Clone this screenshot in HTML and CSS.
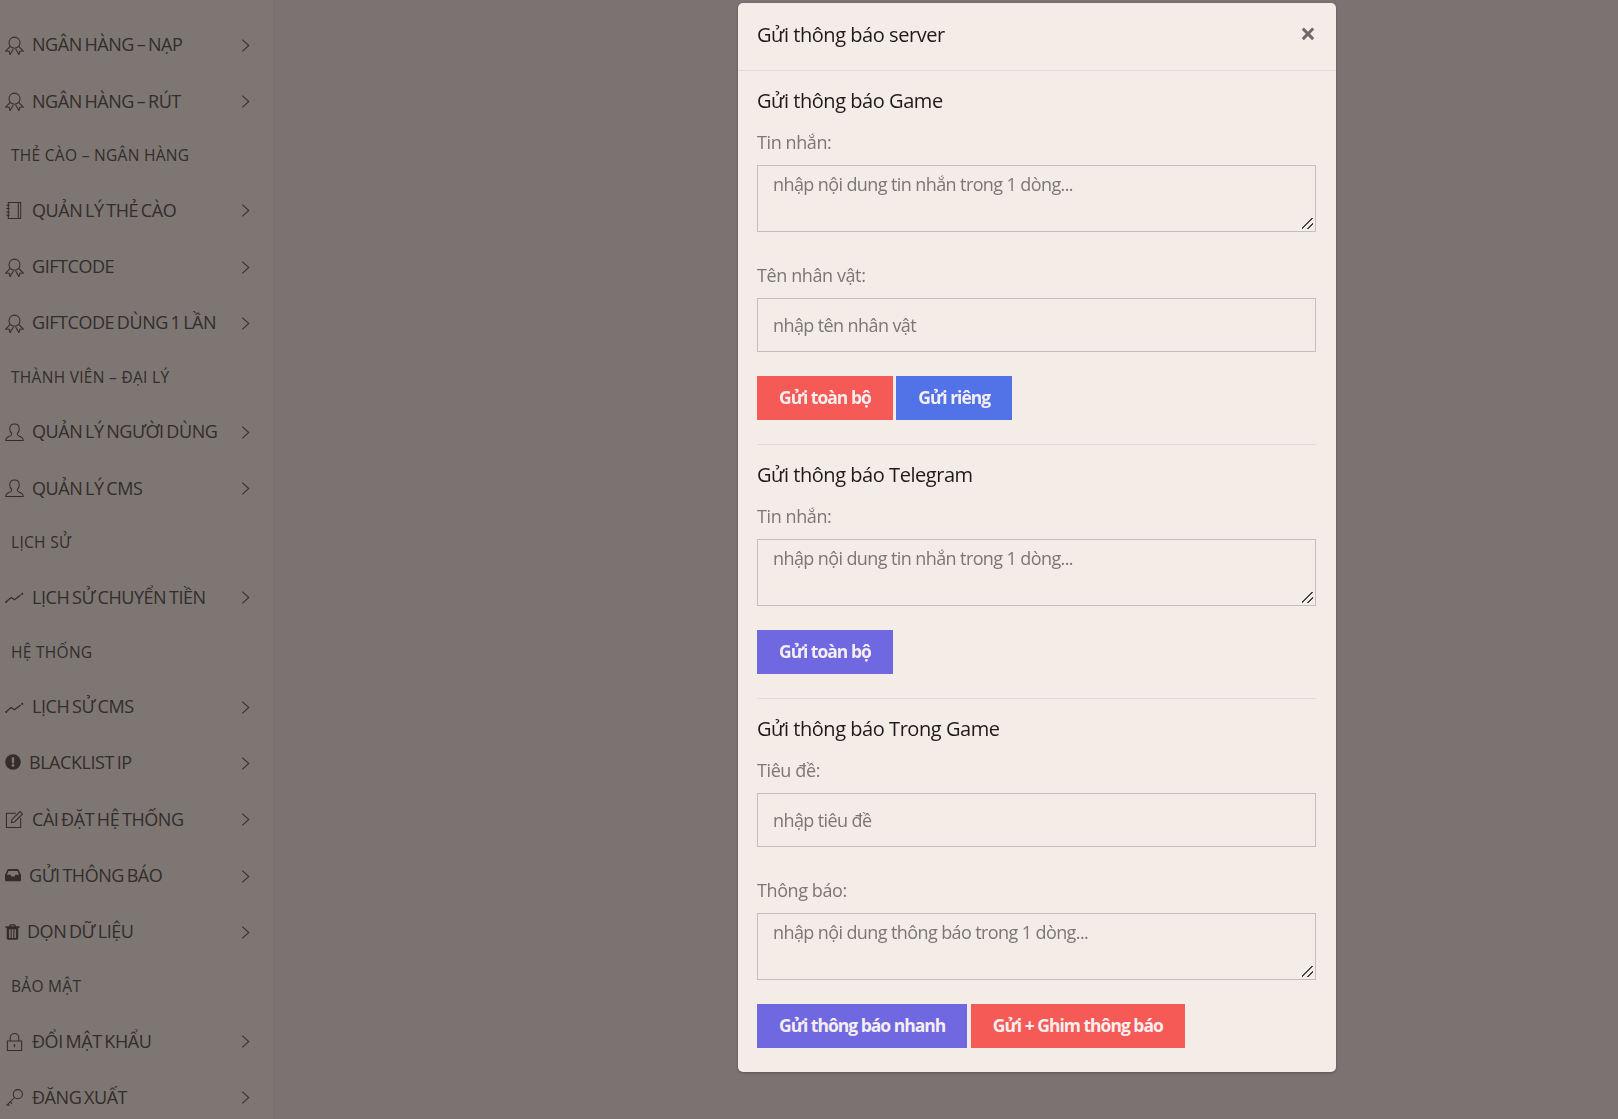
FILE: index.html
```html
<!DOCTYPE html>
<html lang="vi">
<head>
<meta charset="utf-8">
<title>Gửi thông báo server</title>
<link rel="stylesheet" href="styles.css">
</head>
<body>
<svg class="defs" width="0" height="0" aria-hidden="true">
  <symbol id="i-badge" viewBox="0 0 20 20"><g fill="none" stroke="currentColor" stroke-width="1.100"><circle cx="10" cy="7" r="5.800"/><path d="M5.600 11 .8 15.800l3.600.3.9 3.500 3.500-6M14.400 11l4.800 4.800-3.600.3-.9 3.500-3.500-6"/></g></symbol>
  <symbol id="i-book" viewBox="0 0 20 20"><g fill="none" stroke="currentColor" stroke-width="1.100"><path d="M3.500 1.500h13v17h-13zM14 1.500v17"/><path d="M1.500 4.500h3.500M1.500 8h3.500M1.500 11.500h3.500M1.500 15h3.500"/></g></symbol>
  <symbol id="i-user" viewBox="0 0 20 20"><path fill="none" stroke="currentColor" stroke-width="1.100" d="M.8 18.500c0-3 1.500-3.600 4-4.500 2-.8 2.500-1.500 2.300-2.800C5.700 10 5 8 5 6c0-3.200 2-5 5-5s5 1.800 5 5c0 2-.7 4-2.100 5.200-.2 1.300.3 2 2.300 2.800 2.500.9 4 1.500 4 4.500z"/></symbol>
  <symbol id="i-graph" viewBox="0 0 20 20"><g fill="none" stroke="currentColor" stroke-width="1.300"><path d="M1.200 14.500 6.500 10l3.500 2.400L16.500 7.400"/></g><circle cx="1.300" cy="14.700" r="1.100" fill="currentColor"/><circle cx="18.200" cy="6.200" r="1.100" fill="currentColor"/></symbol>
  <symbol id="i-alert" viewBox="0 0 16 16"><circle cx="8" cy="8" r="7.800" fill="currentColor"/><rect class="cut" x="6.800" y="3.200" width="2.400" height="6" rx=".6"/><circle class="cut" cx="8" cy="11.400" r="1.400"/></symbol>
  <symbol id="i-edit" viewBox="0 0 20 20"><g fill="none" stroke="currentColor" stroke-width="1.100"><path d="M11.500 3.500H1.500v15h15V8.500"/><path d="m6.800 13.200.6-3.200L15.800 1.600l2.600 2.600-8.400 8.400z"/></g></symbol>
  <symbol id="i-inbox" viewBox="0 0 16 14"><path fill="currentColor" fill-rule="evenodd" d="M3.500 1h9c.5 0 .9.300 1.100.7L16 7v5c0 .7-.6 1.300-1.300 1.300H1.300C.6 13.300 0 12.700 0 12V7l2.400-5.300C2.600 1.300 3 1 3.500 1zm-.1 2L2 6.700h3.600l.9 1.800h3l.9-1.800H14L12.600 3z"/></symbol>
  <symbol id="i-trash" viewBox="0 0 14 16"><path fill="currentColor" fill-rule="evenodd" d="M5 .3h4c.5 0 .9.300 1 .7l.5 1.300H14v1.700h-1.200V14c0 1-.8 1.800-1.700 1.800H2.900C2 15.800 1.200 15 1.200 14V4H0V2.300h3.500L4 1c.1-.4.500-.7 1-.7zM5 2.300h4L8.600 1.400H5.400zM3.600 5.300v8.800h1.500V5.300zm2.600 0v8.800h1.600V5.300zm2.700 0v8.800h1.500V5.300z"/></symbol>
  <symbol id="i-lock" viewBox="0 0 20 20"><g fill="none" stroke="currentColor" stroke-width="1.100"><path d="M2.500 9.500h15v10h-15zM5.500 9.500V6a4.500 4.500 0 0 1 9 0v3.500"/><path d="M10 13.500v2.500"/></g><circle cx="10" cy="13.800" r="1" fill="currentColor"/></symbol>
  <symbol id="i-key" viewBox="0 0 20 20"><g fill="none" stroke="currentColor" stroke-width="1.100"><circle cx="13.500" cy="6.500" r="4.800"/><path d="M10 10 1.500 18.500M3 17l1.800 1.800M5.500 14.500l2 2"/></g></symbol>
  <symbol id="i-chev" viewBox="0 0 10 14"><path fill="none" stroke="currentColor" stroke-width="1.100" d="m2 1.500 6 5.500-6 5.500"/></symbol>
</svg>

<aside class="sidebar">
  <nav class="menu">
    <a class="item"><svg class="ico"><use href="#i-badge"/></svg><span class="lbl">NGÂN HÀNG – NẠP</span><svg class="chev"><use href="#i-chev"/></svg></a>
    <a class="item"><svg class="ico"><use href="#i-badge"/></svg><span class="lbl">NGÂN HÀNG – RÚT</span><svg class="chev"><use href="#i-chev"/></svg></a>
    <div class="head">THẺ CÀO – NGÂN HÀNG</div>
    <a class="item"><svg class="ico"><use href="#i-book"/></svg><span class="lbl">QUẢN LÝ THẺ CÀO</span><svg class="chev"><use href="#i-chev"/></svg></a>
    <a class="item"><svg class="ico"><use href="#i-badge"/></svg><span class="lbl">GIFTCODE</span><svg class="chev"><use href="#i-chev"/></svg></a>
    <a class="item"><svg class="ico"><use href="#i-badge"/></svg><span class="lbl">GIFTCODE DÙNG 1 LẦN</span><svg class="chev"><use href="#i-chev"/></svg></a>
    <div class="head">THÀNH VIÊN – ĐẠI LÝ</div>
    <a class="item"><svg class="ico"><use href="#i-user"/></svg><span class="lbl">QUẢN LÝ NGƯỜI DÙNG</span><svg class="chev"><use href="#i-chev"/></svg></a>
    <a class="item"><svg class="ico"><use href="#i-user"/></svg><span class="lbl">QUẢN LÝ CMS</span><svg class="chev"><use href="#i-chev"/></svg></a>
    <div class="head">LỊCH SỬ</div>
    <a class="item"><svg class="ico"><use href="#i-graph"/></svg><span class="lbl">LỊCH SỬ CHUYỂN TIỀN</span><svg class="chev"><use href="#i-chev"/></svg></a>
    <div class="head">HỆ THỐNG</div>
    <a class="item"><svg class="ico"><use href="#i-graph"/></svg><span class="lbl">LỊCH SỬ CMS</span><svg class="chev"><use href="#i-chev"/></svg></a>
    <a class="item"><svg class="ico ico-s"><use href="#i-alert"/></svg><span class="lbl">BLACKLIST IP</span><svg class="chev"><use href="#i-chev"/></svg></a>
    <a class="item"><svg class="ico"><use href="#i-edit"/></svg><span class="lbl">CÀI ĐẶT HỆ THỐNG</span><svg class="chev"><use href="#i-chev"/></svg></a>
    <a class="item"><svg class="ico ico-s"><use href="#i-inbox"/></svg><span class="lbl">GỬI THÔNG BÁO</span><svg class="chev"><use href="#i-chev"/></svg></a>
    <a class="item"><svg class="ico ico-t"><use href="#i-trash"/></svg><span class="lbl">DỌN DỮ LIỆU</span><svg class="chev"><use href="#i-chev"/></svg></a>
    <div class="head">BẢO MẬT</div>
    <a class="item"><svg class="ico"><use href="#i-lock"/></svg><span class="lbl">ĐỔI MẬT KHẨU</span><svg class="chev"><use href="#i-chev"/></svg></a>
    <a class="item"><svg class="ico"><use href="#i-key"/></svg><span class="lbl">ĐĂNG XUẤT</span><svg class="chev"><use href="#i-chev"/></svg></a>
  </nav>
</aside>

<div class="backdrop">
  <section class="modal">
    <header class="modal-head">
      <h5 class="modal-title">Gửi thông báo server</h5>
      <span class="close">×</span>
    </header>
    <div class="modal-body">
      <h5 class="sec-title">Gửi thông báo Game</h5>
      <div class="field">
        <label class="flabel">Tin nhắn:</label>
        <textarea class="ctl area" placeholder="nhập nội dung tin nhắn trong 1 dòng..."></textarea>
      </div>
      <div class="field">
        <label class="flabel">Tên nhân vật:</label>
        <input class="ctl inp" placeholder="nhập tên nhân vật">
      </div>
      <div class="btns">
        <button class="btn red">Gửi toàn bộ</button>
        <button class="btn blue">Gửi riêng</button>
      </div>
      <hr class="rule">
      <h5 class="sec-title">Gửi thông báo Telegram</h5>
      <div class="field">
        <label class="flabel">Tin nhắn:</label>
        <textarea class="ctl area" placeholder="nhập nội dung tin nhắn trong 1 dòng..."></textarea>
      </div>
      <div class="btns">
        <button class="btn violet">Gửi toàn bộ</button>
      </div>
      <hr class="rule">
      <h5 class="sec-title">Gửi thông báo Trong Game</h5>
      <div class="field">
        <label class="flabel">Tiêu đề:</label>
        <input class="ctl inp" placeholder="nhập tiêu đề">
      </div>
      <div class="field">
        <label class="flabel">Thông báo:</label>
        <textarea class="ctl area" placeholder="nhập nội dung thông báo trong 1 dòng..."></textarea>
      </div>
      <div class="btns">
        <button class="btn violet">Gửi thông báo nhanh</button>
        <button class="btn red">Gửi + Ghim thông báo</button>
      </div>
    </div>
  </section>
</div>
</body>
</html>
```
FILE: styles.css
```css
* { box-sizing: border-box; }
html, body { margin: 0; height: 100%; overflow: hidden; }
body {
  background: #f6e7e3;
  font-family: "Open Sans", "Noto Sans", sans-serif;
  color: #74645f;
}
.defs { position: absolute; }
.sidebar {
  width: 273px;
  height: 1119px;
  overflow: hidden;
  background: #fcede7;
  box-shadow: 1px 0 5px rgba(0,0,0,.03);
  padding-top: 16px;
}
.menu { display: flex; flex-direction: column; }
.item {
  display: flex;
  align-items: center;
  height: 56.35px;
  padding-left: 5px;
  color: #665a56;
}
.ico { width: 19px; height: 19px; margin-right: 8px; flex: none; position: relative; top: 1px; }
.ico-s { width: 16px; height: 16px; margin-right: 8px; top: 0; }
.ico-t { width: 15px; height: 16px; margin-right: 7px; top: 1px; }
.cut { fill: #fcede7; }
.lbl { font-size: 18px; letter-spacing: -.45px; word-spacing: -1.5px; flex: 1; white-space: nowrap; }
.chev { width: 11px; height: 15px; margin: 2px 22px 0 0; flex: none; color: #74645f; }
.head {
  height: 52.8px;
  display: flex;
  align-items: center;
  padding-left: 11px;
  font-size: 15.5px;
  letter-spacing: .3px;
  color: #665a56;
}
.backdrop {
  position: fixed;
  inset: 0;
  background: rgba(0,0,0,.5);
  padding: 3px 0 0 738px;
}
.modal {
  width: 598px;
  height: 1069px;
  background: #f3ece7;
  border-radius: 5px;
  box-shadow: 0 1px 3px rgba(0,0,0,.3);
}
.modal-head {
  height: 68px;
  border-bottom: 1px solid #e2dcd8;
  padding: 0 19px 4px;
  position: relative;
  display: flex;
  align-items: center;
}
.modal-title, .sec-title {
  margin: 0;
  font-size: 20px;
  font-weight: 400;
  letter-spacing: -.45px;
  color: #1f1a1a;
  line-height: 26px;
}
.close {
  position: absolute;
  right: 20px;
  top: 17px;
  font-size: 28px;
  line-height: 26px;
  font-weight: 700;
  color: #6f6a69;
}
.modal-body { padding: 17px 20px 0 19px; }
.field { margin-top: 17px; margin-bottom: 32px; }
.flabel {
  display: block;
  font-size: 18px;
  letter-spacing: -.4px;
  line-height: 22px;
  color: #7d7675;
  margin-bottom: 12px;
}
.ctl {
  display: block;
  width: 100%;
  border: 1px solid #c4bfbd;
  background: transparent;
  border-radius: 0;
  font-family: inherit;
  font-size: 18px;
  letter-spacing: -.6px;
  color: #333;
  padding: 6px 15px;
  outline: 0;
}
.ctl::placeholder { color: #7d7675; opacity: 1; }
.area { height: 67px; resize: vertical; line-height: 24px; }
.area::-webkit-resizer {
  background: linear-gradient(135deg, transparent 45%, #444 45%, #444 53%, transparent 53%, transparent 70%, #444 70%, #444 78%, transparent 78%) 2px 2px / 11px 11px no-repeat;
}
.inp { height: 54px; }
.btns { margin-top: -8.5px; display: flex; gap: 3.5px; }
.btn {
  border: 0;
  height: 44px;
  padding: 0 22px 2px;
  color: #f5eeee;
  font-family: inherit;
  font-size: 17.5px;
  font-weight: 700;
  letter-spacing: -1px;
}
.red { background: #f55a56; }
.blue { background: #5273e8; }
.violet { background: #7068e0; }
.rule { border: 0; border-top: 1px solid #e2dcd8; margin: 24px 0 17.5px; }
```
